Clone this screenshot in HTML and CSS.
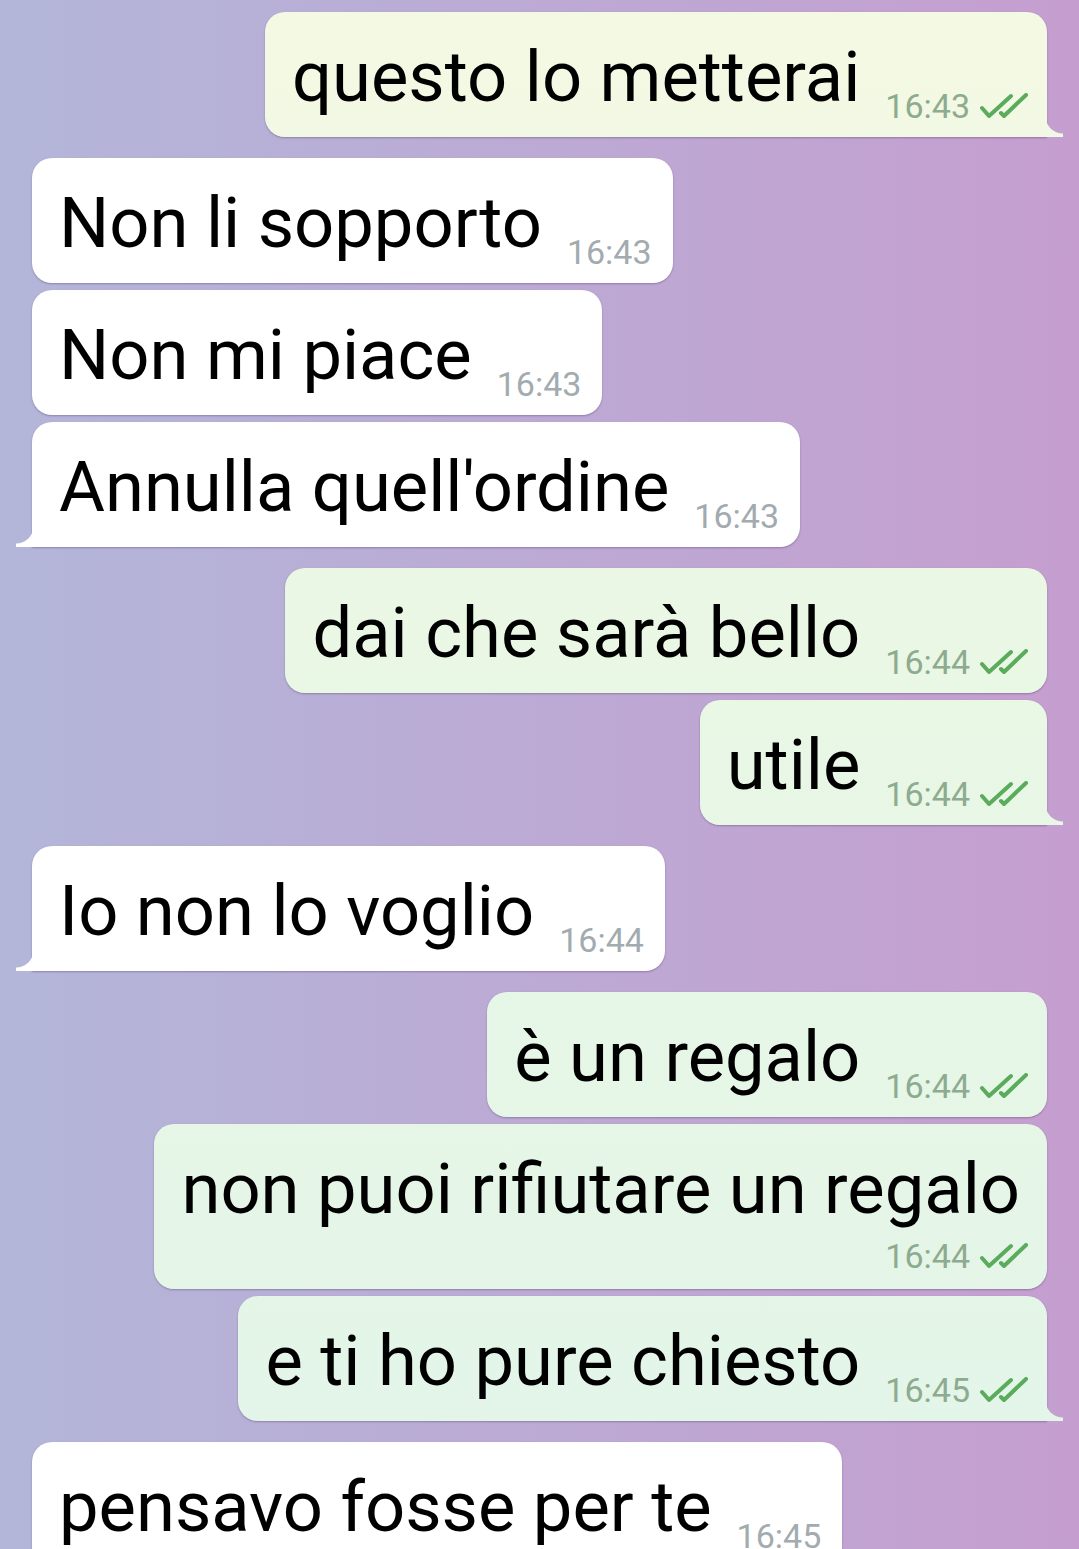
FILE: index.html
```html
<!DOCTYPE html>
<html lang="it">
<head>
  <meta charset="UTF-8" />
  <meta name="viewport" content="width=device-width, initial-scale=1.0" />
  <title>Chat</title>
  <link rel="stylesheet" href="styles.css">
</head>
<body>

  <div class="chat">

    <div class="gruppo">
      <div class="bubble out tail">
        <span class="testo">questo lo metterai</span>
        <span class="meta">16:43 <svg class="spunte" viewBox="0 0 48 26"><path d="M2 15 L9 23 L31 3" /><path d="M21 20 L24 23 L46 2" /></svg></span>
      </div>
    </div>

    <div class="gruppo">
      <div class="bubble in">
        <span class="testo">Non li sopporto</span>
        <span class="meta">16:43</span>
      </div>
      <div class="bubble in">
        <span class="testo">Non mi piace</span>
        <span class="meta">16:43</span>
      </div>
      <div class="bubble in tail">
        <span class="testo">Annulla quell'ordine</span>
        <span class="meta">16:43</span>
      </div>
    </div>

    <div class="gruppo">
      <div class="bubble out">
        <span class="testo">dai che sarà bello</span>
        <span class="meta">16:44 <svg class="spunte" viewBox="0 0 48 26"><path d="M2 15 L9 23 L31 3" /><path d="M21 20 L24 23 L46 2" /></svg></span>
      </div>
      <div class="bubble out tail">
        <span class="testo">utile</span>
        <span class="meta">16:44 <svg class="spunte" viewBox="0 0 48 26"><path d="M2 15 L9 23 L31 3" /><path d="M21 20 L24 23 L46 2" /></svg></span>
      </div>
    </div>

    <div class="gruppo">
      <div class="bubble in tail">
        <span class="testo">Io non lo voglio</span>
        <span class="meta">16:44</span>
      </div>
    </div>

    <div class="gruppo">
      <div class="bubble out">
        <span class="testo">è un regalo</span>
        <span class="meta">16:44 <svg class="spunte" viewBox="0 0 48 26"><path d="M2 15 L9 23 L31 3" /><path d="M21 20 L24 23 L46 2" /></svg></span>
      </div>
      <div class="bubble out lungo">
        <span class="testo">non puoi rifiutare un regalo</span>
        <span class="meta">16:44 <svg class="spunte" viewBox="0 0 48 26"><path d="M2 15 L9 23 L31 3" /><path d="M21 20 L24 23 L46 2" /></svg></span>
      </div>
      <div class="bubble out tail">
        <span class="testo">e ti ho pure chiesto</span>
        <span class="meta">16:45 <svg class="spunte" viewBox="0 0 48 26"><path d="M2 15 L9 23 L31 3" /><path d="M21 20 L24 23 L46 2" /></svg></span>
      </div>
    </div>

    <div class="gruppo">
      <div class="bubble in">
        <span class="testo">pensavo fosse per te</span>
        <span class="meta">16:45</span>
      </div>
    </div>

  </div>

</body>
</html>
```

FILE: styles.css
```css
* {
  box-sizing: border-box;
}

body {
  margin: 0;
  padding: 0;
  height: 1549px;
  overflow: hidden;
  font-family: Roboto, "Noto Sans", sans-serif;
  background: linear-gradient(to right, #b3b6d9, #c59ecf);
}

.chat {
  display: flex;
  flex-direction: column;
  gap: 21px;
  padding: 12px 32px 0;
}

.gruppo {
  display: flex;
  flex-direction: column;
  gap: 7px;
}

.bubble {
  position: relative;
  display: flex;
  align-items: flex-end;
  padding: 23px 19px 18px 27px;
  border-radius: 20px;
  box-shadow: 0 1px 2px rgba(60, 40, 90, 0.35);
}

.in {
  align-self: flex-start;
  background-color: #fff;
  padding-right: 21px;
}

.out {
  align-self: flex-end;
  background: linear-gradient(#f4f9e3, #e9f7e5 45%, #e2f5e9) fixed;
}

.testo {
  font-size: 70.5px;
  line-height: 84px;
  color: #000;
  white-space: nowrap;
}

.meta {
  display: flex;
  align-items: center;
  gap: 10px;
  margin-left: 25px;
  margin-bottom: -4px;
  font-size: 34px;
  line-height: 34px;
  white-space: nowrap;
}

.in .meta {
  color: #a2abaf;
}

.out .meta {
  color: #8dab8e;
}

.spunte {
  width: 48px;
  height: 26px;
  fill: none;
  stroke: #5aab5c;
  stroke-width: 4;
  stroke-linecap: round;
  stroke-linejoin: round;
}

/* messaggio con orario sotto */
.lungo {
  flex-direction: column;
  padding-bottom: 16px;
}

.lungo .testo {
  margin-right: 8px;
}

.lungo .meta {
  align-self: flex-end;
  margin: 8px 0 0;
}

/* codina della nuvoletta */
.tail.out {
  border-bottom-right-radius: 0;
}

.tail.in {
  border-bottom-left-radius: 0;
}

.tail::after {
  content: "";
  position: absolute;
  bottom: 0;
  width: 17px;
  height: 21px;
}

.tail.out::after {
  right: -16px;
  background: linear-gradient(#f4f9e3, #e9f7e5 45%, #e2f5e9) fixed;
  -webkit-mask: radial-gradient(circle at 100% 0, transparent 17px, #000 18px);
  mask: radial-gradient(circle at 100% 0, transparent 17px, #000 18px);
}

.tail.in::after {
  left: -16px;
  background-color: #fff;
  -webkit-mask: radial-gradient(circle at 0 0, transparent 17px, #000 18px);
  mask: radial-gradient(circle at 0 0, transparent 17px, #000 18px);
}
```
